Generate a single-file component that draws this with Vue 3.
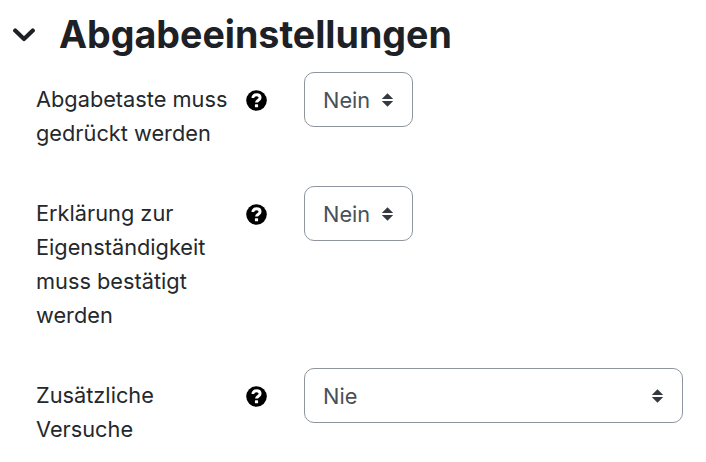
<script setup>
const rows = [
  { label: 'Abgabetaste muss gedrückt werden', value: 'Nein', wide: false },
  { label: 'Erklärung zur Eigenständigkeit muss bestätigt werden', value: 'Nein', wide: false },
  { label: 'Zusätzliche Versuche', value: 'Nie', wide: true }
]
</script>

<template>
  <main class="page">
    <header class="head">
      <svg class="chev" width="22" height="16" viewBox="0 0 22 16" aria-hidden="true">
        <path d="M2.2 3.6 L11 12 L19.8 3.6" fill="none" stroke="#1d2125" stroke-width="4.2" stroke-linecap="round" stroke-linejoin="round" />
      </svg>
      <h2 class="title">Abgabeeinstellungen</h2>
    </header>
    <section class="rows">
      <div v-for="row in rows" :key="row.label" class="row">
        <div class="label">{{ row.label }}</div>
        <svg class="help" width="23" height="23" viewBox="0 0 23 23" aria-hidden="true">
          <circle cx="11.5" cy="11.5" r="10.3" fill="#000" />
          <path d="M7.9 9 C7.9 6.9 9.5 5.8 11.5 5.8 C13.6 5.8 15.1 7 15.1 8.8 C15.1 11.2 11.5 11.2 11.5 13.6" fill="none" stroke="#fff" stroke-width="2.9" />
          <rect x="9.9" y="15.3" width="3.2" height="3" rx="0.6" fill="#fff" />
        </svg>
        <div class="select" :class="{ wide: row.wide }">
          <span class="val">{{ row.value }}</span>
          <svg class="arrows" width="13" height="16" viewBox="0 0 13 16" aria-hidden="true">
            <path d="M6.5 1.2 L12.2 7 L0.8 7 Z M0.8 9 L12.2 9 L6.5 14.8 Z" fill="#343a40" />
          </svg>
        </div>
      </div>
    </section>
  </main>
</template>

<style scoped>
.page {
  width: 706px;
  height: 462px;
  overflow: hidden;
  background: #fff;
  font-family: Inter, "Liberation Sans", sans-serif;
  color: #1d2125;
  box-sizing: border-box;
  padding: 13px 0 0 13px;
}
.head {
  display: flex;
  align-items: center;
  height: 44px;
}
.chev {
  flex: none;
}
.title {
  margin: 0 0 0 24px;
  font-size: 37.6px;
  font-weight: 700;
  line-height: 44px;
  white-space: nowrap;
}
.rows {
  display: flex;
  flex-direction: column;
  gap: 35px;
  margin: 15px 0 0 23px;
}
.row {
  display: flex;
  align-items: flex-start;
}
.label {
  width: 209px;
  flex: none;
  padding: 10px 0 1px;
  font-size: 21.75px;
  line-height: 34px;
  color: #24282c;
}
.help {
  flex: none;
  margin-top: 17px;
}
.select {
  margin-left: 36px;
  width: 109px;
  height: 55px;
  box-sizing: border-box;
  border: 1px solid #8f959e;
  border-radius: 10px;
  padding: 0 18px;
  display: flex;
  align-items: center;
  justify-content: space-between;
  font-size: 21.75px;
  color: #495057;
}
.select.wide {
  width: 379px;
}
.arrows {
  flex: none;
}
</style>
